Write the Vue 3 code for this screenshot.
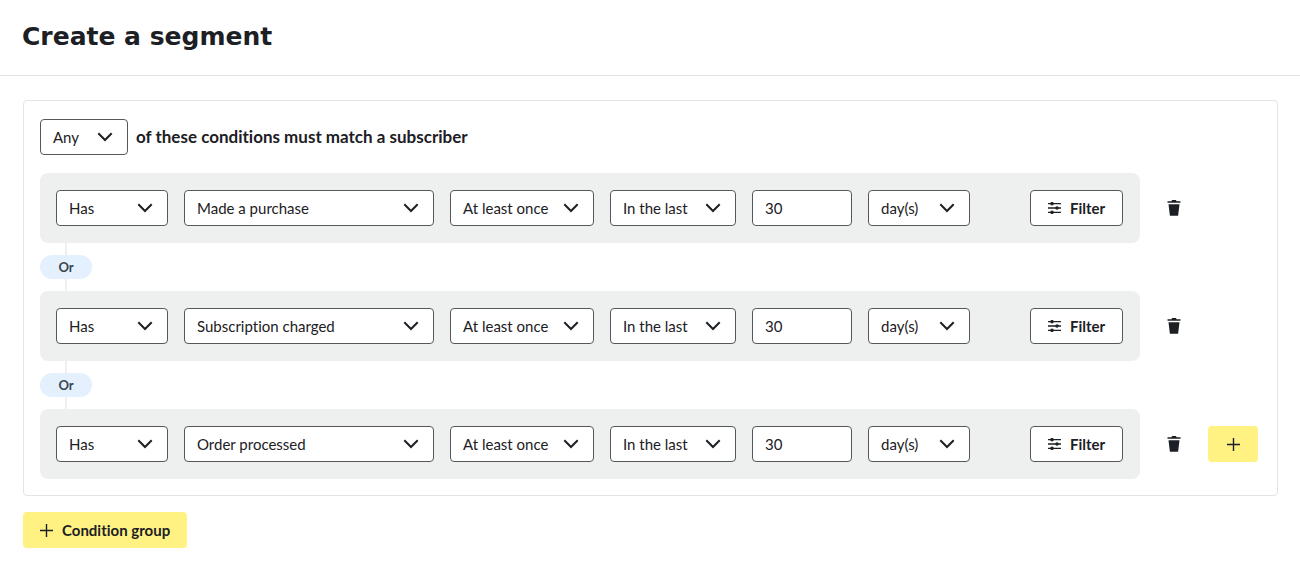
<script setup>
import { ref } from 'vue'

const match = ref('Any')
const conditions = ref([
  { id: 1, has: 'Has', event: 'Made a purchase', frequency: 'At least once', period: 'In the last', amount: '30', unit: 'day(s)' },
  { id: 2, has: 'Has', event: 'Subscription charged', frequency: 'At least once', period: 'In the last', amount: '30', unit: 'day(s)' },
  { id: 3, has: 'Has', event: 'Order processed', frequency: 'At least once', period: 'In the last', amount: '30', unit: 'day(s)' },
])

const fields = [
  { key: 'has', label: 'Has or has not', options: ['Has', 'Has not'] },
  { key: 'event', label: 'Event', options: ['Made a purchase', 'Subscription charged', 'Order processed'] },
  { key: 'frequency', label: 'Frequency', options: ['At least once', 'Exactly'] },
  { key: 'period', label: 'Period', options: ['In the last', 'Before'] },
  { key: 'amount', label: 'Amount' },
  { key: 'unit', label: 'Unit', options: ['day(s)', 'week(s)'] },
]
</script>

<template>
  <header class="header">
    <h1 class="title">Create a segment</h1>
  </header>

  <main class="content">
    <section class="panel">
      <div class="match">
        <span class="field match-field">
          <select id="match" v-model="match" class="control">
            <option>Any</option>
            <option>All</option>
          </select>
          <svg class="chevron" viewBox="0 0 16 10" aria-hidden="true"><path d="M1.3 1.3 8 8l6.700-6.700" /></svg>
        </span>
        <label for="match" class="match-label">of these conditions must match a subscriber</label>
      </div>

      <template v-for="(condition, index) in conditions" :key="condition.id">
        <div v-if="index > 0" class="joiner"><span class="pill">Or</span></div>
        <div class="row">
          <div class="card">
            <span v-for="field in fields" :key="field.key" class="field" :class="field.key">
              <template v-if="field.options">
                <select v-model="condition[field.key]" class="control" :aria-label="field.label">
                  <option v-for="option in field.options" :key="option">{{ option }}</option>
                </select>
                <svg class="chevron" viewBox="0 0 16 10" aria-hidden="true"><path d="M1.3 1.3 8 8l6.700-6.700" /></svg>
              </template>
              <input v-else v-model="condition[field.key]" type="text" class="control" :aria-label="field.label" />
            </span>
            <button type="button" class="filter">
              <svg class="sliders" viewBox="0 0 13 12" aria-hidden="true">
                <path d="M0 1.700h13M0 6h13M0 10.300h13" />
                <circle cx="4" cy="1.700" r="1.100" />
                <circle cx="9" cy="6" r="1.100" />
                <circle cx="4" cy="10.300" r="1.100" />
              </svg>
              Filter
            </button>
          </div>
          <button type="button" class="trash" aria-label="Delete condition">
            <svg viewBox="0 0 14 16" aria-hidden="true">
              <path d="M0.500 1.200h4L5 0h4l0.500 1.200h4v1.600h-13zM1.500 4.200h11L11.100 15.700H2.900z" />
            </svg>
          </button>
          <span class="add-slot">
            <button v-if="index === conditions.length - 1" type="button" class="add" aria-label="Add condition">
              <svg class="plus" viewBox="0 0 13 13" aria-hidden="true"><path d="M6.500 0v13M0 6.500h13" /></svg>
            </button>
          </span>
        </div>
      </template>
    </section>

    <button type="button" class="add-group">
      <svg class="plus" viewBox="0 0 13 13" aria-hidden="true"><path d="M6.500 0v13M0 6.500h13" /></svg>
      Condition group
    </button>
  </main>
</template>

<style>
body {
  background: #fff;
}
</style>

<style scoped>
.header,
.content,
.control,
button {
  box-sizing: border-box;
  color: #1c2024;
  font-family: Lato, "Open Sans", sans-serif;
  font-size: 15px;
  font-variant-ligatures: none;
}

.header {
  padding: 21px 22px 22px;
  border-bottom: 1px solid #e1e2e2;
}

.title {
  margin: 0;
  font: 700 25px/32px "DejaVu Sans", sans-serif;
}

.content {
  padding: 24px 22px 24px 23px;
}

.panel {
  padding: 18px 19px 16px 16px;
  border: 1px solid #e3e4e4;
  border-radius: 4px;
}

.match {
  display: flex;
  align-items: center;
  gap: 8px;
  margin-bottom: 18px;
}

.match-label {
  padding-bottom: 2px;
  font-size: 17px;
  font-weight: 700;
}

.field {
  position: relative;
  display: block;
  flex: none;
}

.control {
  display: block;
  width: 100%;
  height: 36px;
  margin: 0;
  padding: 0 12px;
  border: 1px solid #55595b;
  border-radius: 4px;
  background: #fff;
  appearance: none;
}

.chevron {
  position: absolute;
  top: 13px;
  right: 15px;
  width: 16px;
  height: 10px;
  fill: none;
  stroke: #1c2024;
  stroke-width: 2;
  pointer-events: none;
}

.match-field { width: 88px; }
.has { width: 112px; }
.event { width: 250px; }
.frequency { width: 144px; }
.period { width: 126px; }
.amount { width: 100px; }
.unit { width: 102px; }

.row {
  display: flex;
  align-items: center;
  gap: 16px;
}

.card {
  display: flex;
  flex: 1;
  gap: 16px;
  padding: 17px 17px 17px 16px;
  border-radius: 8px;
  background: #eef0ef;
}

button {
  display: flex;
  align-items: center;
  justify-content: center;
  height: 36px;
  margin: 0;
  padding: 0;
  border: 0;
  border-radius: 4px;
  font-weight: 700;
  cursor: pointer;
}

.filter {
  gap: 9px;
  width: 93px;
  margin-left: auto;
  border: 1px solid #55595b;
  background: #fff;
}

.sliders {
  width: 13px;
  height: 12px;
  fill: #1c2024;
  stroke: #1c2024;
  stroke-width: 1.3;
}

.trash {
  width: 36px;
  background: none;
}

.trash svg {
  width: 14px;
  height: 16px;
  fill: #1c2024;
}

.add-slot {
  width: 50px;
}

.add {
  width: 100%;
  background: #fff282;
}

.plus {
  width: 13px;
  height: 13px;
  fill: none;
  stroke: #1c2024;
  stroke-width: 1.4;
}

.joiner {
  width: 52px;
  padding: 12px 0;
  background: linear-gradient(#eef0ef, #eef0ef) 50% 0 / 2px 100% no-repeat;
}

.pill {
  display: block;
  border-radius: 12px;
  background: #e5f0fe;
  color: #3a454f;
  font-size: 13px;
  font-weight: 700;
  line-height: 24px;
  text-align: center;
}

.add-group {
  gap: 9px;
  margin-top: 16px;
  padding: 0 17px;
  background: #fff282;
}
</style>
